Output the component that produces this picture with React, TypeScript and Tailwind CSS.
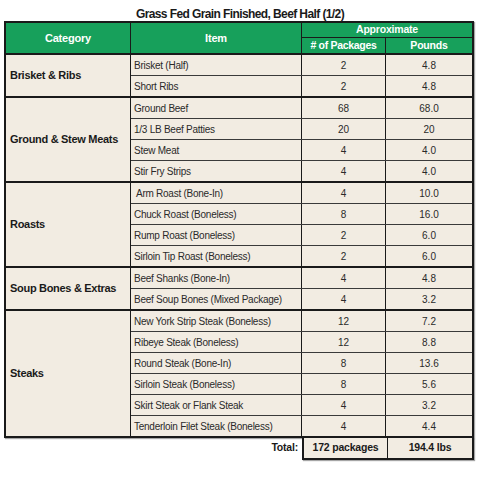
import React from "react";

type Item = { name: string; pk: string; lb: string };
type Group = { cat: string; items: Item[] };

const groups: Group[] = [
  {
    cat: "Brisket & Ribs",
    items: [
      { name: "Brisket (Half)", pk: "2", lb: "4.8" },
      { name: "Short Ribs", pk: "2", lb: "4.8" },
    ],
  },
  {
    cat: "Ground & Stew Meats",
    items: [
      { name: "Ground Beef", pk: "68", lb: "68.0" },
      { name: "1/3 LB Beef Patties", pk: "20", lb: "20" },
      { name: "Stew Meat", pk: "4", lb: "4.0" },
      { name: "Stir Fry Strips", pk: "4", lb: "4.0" },
    ],
  },
  {
    cat: "Roasts",
    items: [
      { name: " Arm Roast (Bone-In)", pk: "4", lb: "10.0" },
      { name: "Chuck Roast (Boneless)", pk: "8", lb: "16.0" },
      { name: "Rump Roast (Boneless)", pk: "2", lb: "6.0" },
      { name: "Sirloin Tip Roast (Boneless)", pk: "2", lb: "6.0" },
    ],
  },
  {
    cat: "Soup Bones & Extras",
    items: [
      { name: "Beef Shanks (Bone-In)", pk: "4", lb: "4.8" },
      { name: "Beef Soup Bones (Mixed Package)", pk: "4", lb: "3.2" },
    ],
  },
  {
    cat: "Steaks",
    items: [
      { name: "New York Strip Steak (Boneless)", pk: "12", lb: "7.2" },
      { name: "Ribeye Steak (Boneless)", pk: "12", lb: "8.8" },
      { name: "Round Steak (Bone-In)", pk: "8", lb: "13.6" },
      { name: "Sirloin Steak (Boneless)", pk: "8", lb: "5.6" },
      { name: "Skirt Steak or Flank Steak", pk: "4", lb: "3.2" },
      { name: "Tenderloin Filet Steak (Boneless)", pk: "4", lb: "4.4" },
    ],
  },
];

export default function App() {
  return (
    <div
      className="w-[480px] h-[480px] bg-white text-[#1a1a1a] overflow-hidden"
      style={{ fontFamily: '"Liberation Sans", Arial, sans-serif' }}
    >
      <div className="h-[21px] flex items-end justify-center pb-[1px] text-[12px] font-bold tracking-[-0.6px] leading-none">
        Grass Fed Grain Finished, Beef Half (1/2)
      </div>
      <div className="ml-[4px] w-[470px]">
        <div className="border-2 border-[#1a1a1a] shadow-[1px_1px_1px_rgba(0,0,0,0.35)]">
          {/* header */}
          <div className="flex bg-[#17a05b] text-white font-bold border-b-2 border-[#1a1a1a] h-[32px]">
            <div className="w-[125px] border-r border-[#1a1a1a] flex items-center justify-center text-[11px] tracking-[-0.2px]">
              Category
            </div>
            <div className="w-[171px] border-r border-[#1a1a1a] flex items-center justify-center text-[11px] tracking-[-0.2px]">
              Item
            </div>
            <div className="flex-1 flex flex-col">
              <div className="h-[15px] border-b border-[#1a1a1a] flex items-center justify-center text-[10.5px] tracking-[-0.2px]">
                Approximate
              </div>
              <div className="flex-1 flex">
                <div className="w-[84px] border-r border-[#1a1a1a] flex items-center justify-center text-[10.5px] tracking-[-0.3px]">
                  # of Packages
                </div>
                <div className="flex-1 flex items-center justify-center text-[10.5px] tracking-[-0.2px]">
                  Pounds
                </div>
              </div>
            </div>
          </div>
          {/* body */}
          {groups.map((g, gi) => (
            <div
              key={g.cat}
              className={`flex bg-[#f2ece2] ${gi < groups.length - 1 ? "border-b-2 border-[#1a1a1a]" : ""}`}
            >
              <div className="w-[125px] border-r border-[#1a1a1a] flex items-center pl-[4px] text-[11px] font-bold tracking-[-0.3px]">
                {g.cat}
              </div>
              <div className="flex-1 flex flex-col">
                {g.items.map((it, ii) => (
                  <div
                    key={it.name}
                    className={`flex h-[20px] box-content ${ii < g.items.length - 1 ? "border-b border-[#3a3a3a]" : ""}`}
                  >
                    <div className="w-[171px] border-r border-[#1a1a1a] flex items-center pl-[3px] text-[10px] text-[#2a2a2a] tracking-[-0.25px] whitespace-pre">
                      {it.name}
                    </div>
                    <div className="w-[84px] border-r border-[#1a1a1a] flex items-center justify-center text-[10px] text-[#2a2a2a]">
                      {it.pk}
                    </div>
                    <div className="flex-1 flex items-center justify-center text-[10px] text-[#2a2a2a]">{it.lb}</div>
                  </div>
                ))}
              </div>
            </div>
          ))}
        </div>
        {/* total */}
        <div className="flex">
          <div className="w-[298px] flex items-center justify-end pr-[4px] text-[10.5px] font-bold tracking-[-0.2px] h-[20px]">
            Total:
          </div>
          <div className="flex-1 flex border-2 border-t-0 border-[#1a1a1a] bg-[#f2ece2] h-[22px] shadow-[1px_1px_1px_rgba(0,0,0,0.35)]">
            <div className="w-[84px] border-r border-[#1a1a1a] flex items-center justify-center text-[10.5px] font-bold tracking-[-0.2px]">
              172 packages
            </div>
            <div className="flex-1 flex items-center justify-center text-[10.5px] font-bold tracking-[-0.2px]">
              194.4 lbs
            </div>
          </div>
        </div>
      </div>
    </div>
  );
}
